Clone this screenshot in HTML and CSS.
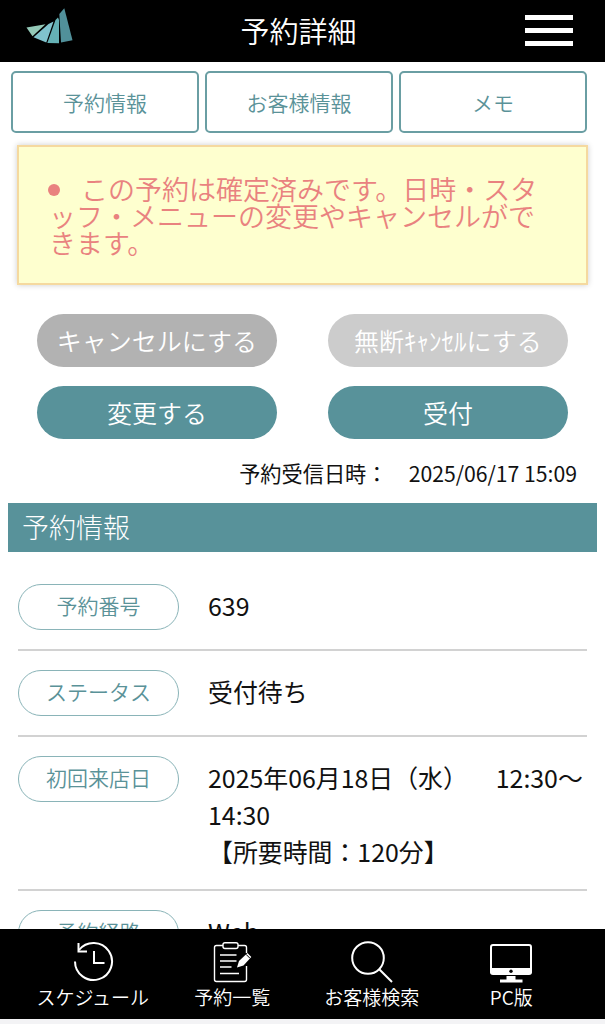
FILE: index.html
```html
<!DOCTYPE html>
<html lang="ja">
<head>
    <meta charset="UTF-8">
    <meta name="viewport" content="width=device-width, initial-scale=1.0">
    <title>予約詳細</title>
    <link rel="stylesheet" href="styles.css">
</head>
<body>
    <header class="header">
        <svg class="logo" width="48" height="38" viewBox="0 0 48 38">
            <path fill="#94c9b8" d="M0.5 20.500 L19.500 17.300 L6.500 29.300 Z"/>
            <path fill="#80c3cd" d="M7.500 30.300 L22.500 17 L27.500 14.500 L20.300 35.500 Z"/>
            <path fill="#65b1b5" d="M21.300 36 L29.500 13 L32 10.500 L33 13 V36.300 Z"/>
            <path fill="#51909a" d="M33.300 7 L38.300 1.300 L46.500 33.200 L35 35.500 Z"/>
        </svg>
        <h1 class="title">予約詳細</h1>
        <button class="menu-button" aria-label="メニュー">
            <span></span>
            <span></span>
            <span></span>
        </button>
    </header>

    <main class="main">
        <div class="tabs">
            <a class="tab">予約情報</a>
            <a class="tab">お客様情報</a>
            <a class="tab">メモ</a>
        </div>

        <div class="alert">
            <p class="alert-text"><span class="dot"></span>この予約は確定済みです。日時・スタ<br>ッフ・メニューの変更やキャンセルがで<br>きます。</p>
        </div>

        <div class="buttons">
            <button class="btn btn-cancel">キャンセルにする</button>
            <button class="btn btn-noshow">無断ｷｬﾝｾﾙにする</button>
            <button class="btn">変更する</button>
            <button class="btn">受付</button>
        </div>

        <p class="received">予約受信日時：　2025/06/17 15:09</p>

        <h2 class="section-title">予約情報</h2>

        <div class="list">
            <div class="row">
                <div class="label">予約番号</div>
                <div class="value">639</div>
            </div>
            <div class="row">
                <div class="label">ステータス</div>
                <div class="value">受付待ち</div>
            </div>
            <div class="row">
                <div class="label">初回来店日</div>
                <div class="value">2025年06月18日（水）　<span class="time">12:30～</span><br>14:30<br>【所要時間：120分】</div>
            </div>
            <div class="row">
                <div class="label">予約経路</div>
                <div class="value">Web</div>
            </div>
        </div>
    </main>

    <nav class="footer">
        <a class="nav-item">
            <svg width="42" height="42" viewBox="0 0 42 42" fill="none" stroke="#fff" stroke-width="2">
                <path d="M3 20.500 A18.500 18.500 0 1 0 7 9"/>
                <path d="M6.500 2 V10.500 H15"/>
                <path d="M22 10 V22 H32.500"/>
            </svg>
            <span>スケジュール</span>
        </a>
        <a class="nav-item">
            <svg width="42" height="42" viewBox="0 0 42 42" fill="none" stroke="#fff" stroke-width="1.4">
                <path d="M12 4.500 H5.500 Q3.500 4.500 3.500 6.500 V38.500 Q3.500 40.500 5.500 40.500 H33.500 Q35.500 40.500 35.500 38.500 V25 M35.500 12 V6.500 Q35.500 4.500 33.500 4.500 H27"/>
                <path d="M12 3.500 Q12 1.700 14 1.700 H25 Q27 1.700 27 3.500 V5.500 Q27 7.500 25 7.500 H14 Q12 7.500 12 5.500 Z"/>
                <path d="M9 14 H25.500 M9 20 H25.500 M9 26 H20.500 M9 32.500 H28"/>
                <path fill="#fff" stroke="none" d="M26 26.500 L28 20 L36.500 12 L40.300 16 L32.500 24.500 Z"/>
                <path stroke="#000" stroke-width="1" d="M35 13.300 L39 17.300"/>
            </svg>
            <span>予約一覧</span>
        </a>
        <a class="nav-item">
            <svg width="42" height="42" viewBox="0 0 42 42" fill="none" stroke="#fff" stroke-width="2">
                <circle cx="17" cy="17" r="15.800"/>
                <path d="M28.200 28.200 L41 41"/>
            </svg>
            <span>お客様検索</span>
        </a>
        <a class="nav-item">
            <svg width="42" height="42" viewBox="0 0 42 42">
                <rect x="1" y="4" width="40" height="28" rx="2" fill="none" stroke="#fff" stroke-width="2"/>
                <path fill="#fff" d="M0 27 H42 V31 Q42 34 39 34 H3 Q0 34 0 31 Z M16.500 35 H25.500 V38.500 H32.500 V41.500 H10 V38.500 H16.500 Z"/>
                <circle cx="21" cy="30.300" r="1.700" fill="#000"/>
            </svg>
            <span>PC版</span>
        </a>
    </nav>
</body>
</html>
```

FILE: styles.css
```css
* {
    box-sizing: border-box;
}

body {
    display: flex;
    flex-direction: column;
    height: 100vh;
    margin: 0;
    overflow: hidden;
    background-color: #fff;
    color: #111;
    font-family: "Noto Sans CJK JP", sans-serif;
}

button {
    border: none;
    font-family: inherit;
    cursor: pointer;
}

.header {
    display: grid;
    grid-template-columns: 48px 1fr 48px;
    align-items: center;
    flex: none;
    height: 62px;
    padding: 0 32px 0 26px;
    background-color: #000;
}

.logo {
    margin-bottom: 11px;
}

.title {
    margin: 0 2px 0 0;
    color: #fff;
    font-size: 29px;
    font-weight: 350;
    line-height: 58px;
    padding-bottom: 2px;
    text-align: center;
}

.menu-button {
    display: flex;
    flex-direction: column;
    gap: 8px;
    margin-bottom: 1px;
    padding: 0;
    background: none;
}

.menu-button span {
    width: 48px;
    height: 5px;
    background-color: #fff;
}

.main {
    flex: 1;
    min-height: 0;
    overflow: hidden;
    padding: 9px 8px 0;
}

.tabs {
    display: flex;
    gap: 6px;
    padding: 0 10px 0 3px;
}

.tab {
    flex: 1;
    height: 62px;
    border: 2px solid #6a9ea3;
    border-radius: 5px;
    color: #5a9298;
    font-size: 21px;
    font-weight: 350;
    line-height: 58px;
    text-align: center;
}

.alert {
    height: 140px;
    margin: 12px 9px 0;
    padding: 28px 0 0 30px;
    border: 2px solid #f5d99f;
    background-color: #feffcf;
    box-shadow: 0 0 6px rgba(0, 0, 0, 0.2);
}

.alert-text {
    margin: 0;
    color: #e9827f;
    font-size: 27px;
    font-weight: 350;
    line-height: 27px;
    white-space: nowrap;
    text-spacing-trim: space-all;
}

.dot {
    display: inline-block;
    width: 12px;
    height: 12px;
    margin: 0 21px 0 -1px;
    border-radius: 50%;
    background-color: #e9827f;
    vertical-align: 4px;
}

.buttons {
    display: grid;
    grid-template-columns: 240px 240px;
    gap: 19px 51px;
    margin: 29px 0 0 29px;
}

.btn {
    height: 53px;
    padding: 0;
    border-radius: 27px;
    background-color: #58929a;
    color: #fff;
    font-size: 25px;
    font-weight: 350;
    line-height: 53px;
}

.btn-cancel {
    background-color: #b2b2b2;
}

.btn-noshow {
    background-color: #ccc;
}

.received {
    margin: 17px 20px 0 0;
    font-size: 21.2px;
    line-height: 34px;
    text-align: right;
}

.section-title {
    height: 49px;
    margin: 13px 0 0;
    padding-left: 14px;
    background-color: #58929a;
    color: #fff;
    font-size: 27px;
    font-weight: 300;
    line-height: 47px;
}

.list {
    padding: 13px 10px 0;
}

.row {
    display: flex;
    gap: 29px;
    padding: 19px 0;
    border-bottom: 2px solid #d2d2d2;
}

.label {
    flex: none;
    width: 161px;
    height: 46px;
    border: 1.5px solid #8ab4b8;
    border-radius: 23px;
    color: #5a9298;
    font-size: 21px;
    font-weight: 350;
    line-height: 40px;
    text-align: center;
}

.value {
    margin: 3px 0 0;
    font-size: 24.9px;
    line-height: 37px;
    white-space: nowrap;
    text-spacing-trim: space-all;
}

.time {
    margin-left: 3px;
}

.footer {
    display: flex;
    flex: none;
    height: 95px;
    padding: 12px 24px 0 23px;
    border-bottom: 5px solid #f3f3f5;
    background-color: #000;
}

.nav-item {
    display: flex;
    flex-direction: column;
    align-items: center;
    flex: 1;
    color: #fff;
    font-size: 19px;
    font-weight: 350;
    line-height: 28px;
}
```
